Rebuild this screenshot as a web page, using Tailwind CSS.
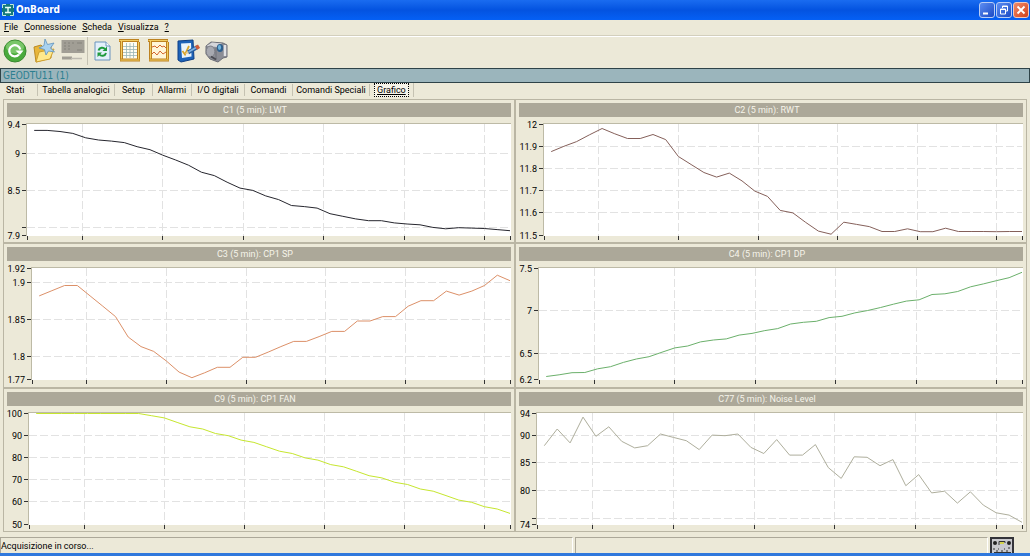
<!DOCTYPE html>
<html lang="it">
<head>
  <meta charset="UTF-8">
  <meta name="viewport" content="width=device-width, initial-scale=1">
  <title>OnBoard</title>
  <script src="https://cdn.jsdelivr.net/npm/@tailwindcss/browser@4"></script>
</head>
<body class="h-screen flex flex-col overflow-hidden bg-[#ece9d8] text-black text-[9px] leading-3 font-['Roboto','Liberation_Sans',sans-serif]">

  <!-- Title bar -->
  <header class="h-5 shrink-0 flex items-center gap-0.5 pl-0.5 pr-px bg-linear-to-b from-[#1a6cf0] via-[#0453e0] to-[#0560f5]">
    <svg class="size-3" viewBox="0 0 12 12">
      <rect width="12" height="12" fill="#147a7c"/>
      <path d="M.5 4V.5H4M8 .5h3.5V4M11.5 8v3.5H8M4 11.5H.5V8" fill="none" stroke="#bfe8e0"/>
      <path d="M3 3.5h6M6 3.5v5M3 8.5h6" fill="none" stroke="#e8fffa" stroke-width="1.4"/>
    </svg>
    <h1 class="flex-1 text-white font-bold text-[10px] font-['DejaVu_Sans_Condensed','DejaVu_Sans',sans-serif]">OnBoard</h1>
    <div class="flex gap-px">
      <button aria-label="Riduci a icona" class="size-4 rounded-[3px] border border-[#b9cdf5] bg-linear-to-br from-[#5d8df2] to-[#1c49c4]">
        <svg viewBox="0 0 14 14"><path d="M3 10.5h5" stroke="#fff" stroke-width="2"/></svg>
      </button>
      <button aria-label="Ripristina" class="size-4 rounded-[3px] border border-[#b9cdf5] bg-linear-to-br from-[#5d8df2] to-[#1c49c4]">
        <svg viewBox="0 0 14 14" fill="none" stroke="#fff"><path d="M5.5 5V3h5v5H9M5.5 3.5h5"/><path d="M3.5 6h5v5h-5zM3.5 6.5h5"/></svg>
      </button>
      <button aria-label="Chiudi" class="size-4 rounded-[3px] border border-[#efc8bc] bg-linear-to-br from-[#f08a68] to-[#cf3f16]">
        <svg viewBox="0 0 14 14"><path d="M3.5 3.5l7 7M10.5 3.5l-7 7" stroke="#fff" stroke-width="1.8"/></svg>
      </button>
    </div>
  </header>

  <!-- Menu -->
  <nav class="h-4 shrink-0 flex items-center gap-1.5 pl-1 pb-px border-b border-[#d3cfbd]">
    <button><u>F</u>ile</button>
    <button><u>C</u>onnessione</button>
    <button><u>S</u>cheda</button>
    <button><u>V</u>isualizza</button>
    <button><u>?</u></button>
  </nav>

  <!-- Toolbar -->
  <div class="h-8 shrink-0 flex items-center pb-1 border-t border-white">
    <button aria-label="Aggiorna" class="w-[29px] flex justify-center">
      <svg class="size-6" viewBox="0 0 24 24">
        <circle cx="12" cy="12" r="11" fill="#4aaa3c" stroke="#3b8a31"/>
        <ellipse cx="12" cy="8" rx="9" ry="6.5" fill="#9ad886" opacity=".6"/>
        <path d="M16 15.5A5.6 5.6 0 1 1 17.3 10.5" fill="none" stroke="#fff" stroke-width="2.2"/>
        <path d="M12.5 11.5h8l-3.6 4.5z" fill="#fff"/>
      </svg>
    </button>
    <button aria-label="Apri" class="w-[29px] flex justify-center">
      <svg class="size-6" viewBox="0 0 24 24">
        <path d="M2 8l7-2 2 2 8-1v12L4 23z" fill="#e8b63a" stroke="#b98a25"/>
        <path d="M4 23l3-10 15-3-4 10z" fill="#ffe98c" stroke="#cfa02e"/>
        <path d="M13 0l2.5 5.5L22 4l-3.5 5 4 4-6-1-2.5 4-1.5-5.5L7 9l5-2.5z" fill="#a9d2f0" stroke="#5e92bd" stroke-width=".8"/>
      </svg>
    </button>
    <button aria-label="Scheda" class="w-[29px] flex justify-center">
      <svg class="size-6" viewBox="0 0 24 24">
        <path d="M.5 1h23v13H.5z" fill="#a19e95"/>
        <path d="M3 4h2M7 4h2M11 4h2M3 7h2M7 7h2M3 10h2M7 10h2M16 4h5M16 11h5" stroke="#84827a"/>
        <path d="M1 19h10" stroke="#a19e95" stroke-width="3"/>
        <path d="M10 19.5h11" stroke="#bdbab0" stroke-width="1.5"/>
      </svg>
    </button>
    <div class="h-7 border-l border-[#c5c2b2]"></div>
    <button aria-label="Ricarica pagina" class="w-[27px] flex justify-center">
      <svg class="size-6" viewBox="0 0 24 24">
        <path d="M5 3h11l4 4v14H5z" fill="#e3f0fa" stroke="#6b94bd"/>
        <path d="M16 3v4h4" fill="#fff" stroke="#6b94bd"/>
        <path d="M8.5 11.5c1-3.5 5-3.5 6.5-1.5M16 14c-1 3.5-5 3.5-6.5 1.5" fill="none" stroke="#1f9a3d" stroke-width="2"/>
        <path d="M17 7.5V12h-4.5zM7.5 18v-4.5H12z" fill="#1f9a3d"/>
      </svg>
    </button>
    <button aria-label="Tabella" class="w-[29px] flex justify-center">
      <svg class="size-6" viewBox="0 0 24 24">
        <path d="M4 3h16v17H4z" fill="#fffdf0"/>
        <path d="M5 7.5h14M5 10.5h14M5 13.5h14M5 16.5h14M8.5 4v15M12 4v15M15.5 4v15" stroke="#9ab5b6" stroke-width=".8"/>
        <path d="M1 1.5h20M3.5 2v19" stroke="#bd8220" stroke-width="3"/>
        <path d="M1.5 1.5h19M3.5 2v18" stroke="#f2cd62"/>
        <path d="M20.5 3v17M2 21h20" stroke="#bd8220" stroke-width="3"/>
        <path d="M20.5 3v17M2.5 21h19" stroke="#f2cd62"/>
      </svg>
    </button>
    <button aria-label="Grafico" class="w-[29px] flex justify-center">
      <svg class="size-6" viewBox="0 0 24 24">
        <path d="M4 3h16v17H4z" fill="#fff6d8"/>
        <path d="M5 8l3-1 2 2 3-3 2 2 2-1 2 2M5 15l2-2 3 3 3-4 3 3 3-2" fill="none" stroke="#d3662e"/>
        <path d="M1 1.5h20M3.5 2v19" stroke="#bd8220" stroke-width="3"/>
        <path d="M1.5 1.5h19M3.5 2v18" stroke="#f2cd62"/>
        <path d="M20.5 3v17M2 21h20" stroke="#bd8220" stroke-width="3"/>
        <path d="M20.5 3v17M2.5 21h19" stroke="#f2cd62"/>
      </svg>
    </button>
    <button aria-label="Configura" class="w-[29px] flex justify-center">
      <svg class="size-6" viewBox="0 0 24 24">
        <path d="M2 2l15-1 1 19-13 3-3-2z" fill="#1d63b8" stroke="#0e3f86"/>
        <path d="M5 4.5l10-.5.5 13.500L6 19z" fill="#eaf4fb"/>
        <path d="M6.5 12l2.500 3.500L13 7" fill="none" stroke="#d9a52a" stroke-width="1.8"/>
        <path d="M12 13.5L21.5 8" stroke="#285f9f" stroke-width="4"/>
        <path d="M12.5 13L21 8" stroke="#7fb2e4" stroke-width="1.5"/>
        <path d="M20 9l3-1.800" stroke="#cf5b38" stroke-width="4"/>
        <path d="M9 15l2.500-3 1.500 2.500z" fill="#e8cf9a"/>
      </svg>
    </button>
    <button aria-label="Registra" class="w-[29px] flex justify-center">
      <svg class="size-6" viewBox="0 0 24 24">
        <path d="M1 7l5-4 12 1 4 2v12l-4 1-5 4-8-3-4-5z" fill="#8b8d95" stroke="#6c6e76"/>
        <path d="M1.500 7l5.500-3.500 10 1L12 8z" fill="#d5d6da"/>
        <ellipse cx="5.5" cy="12.5" rx="4.3" ry="5.5" fill="#a7a9b0" stroke="#7d7f87"/>
        <path d="M11 9v12" stroke="#70727a"/>
        <ellipse cx="15" cy="9" rx="3.2" ry="4" fill="#2f5f8c"/>
        <ellipse cx="14.5" cy="8.5" rx="1.6" ry="2.4" fill="#6fb4dc"/>
        <path d="M20 6v11" stroke="#e1e2e5" stroke-width="2.5"/>
        <path d="M6 17.5l5 3" stroke="#4a4b52" stroke-width="2"/>
      </svg>
    </button>
  </div>

  <div class="h-[15px] shrink-0 flex items-center pl-0.5 border border-[#2e4348] bg-[#9bb5bc] text-[10px] text-[#2c7f90] font-['DejaVu_Sans_Condensed','DejaVu_Sans',sans-serif]">GEODTU11 (1)</div>

  <!-- Tabs -->
  <nav class="h-4 shrink-0 flex items-center pb-0.5 text-center whitespace-nowrap">
    <a href="#" class="w-[38px] pl-1.5 text-left border-r border-[#c5c2b2]">Stati</a>
    <a href="#" class="w-[77px] border-r border-[#c5c2b2]">Tabella analogici</a>
    <a href="#" class="w-[38px] border-r border-[#c5c2b2]">Setup</a>
    <a href="#" class="w-[39px] border-r border-[#c5c2b2]">Allarmi</a>
    <a href="#" class="w-[53px] border-r border-[#c5c2b2]">I/O digitali</a>
    <a href="#" class="w-12 border-r border-[#c5c2b2]">Comandi</a>
    <a href="#" class="w-[77px] border-r border-[#c5c2b2]">Comandi Speciali</a>
    <div class="px-1 border-r border-[#c5c2b2]">
      <a href="#" aria-current="page" class="block px-0.5 border border-dotted border-black bg-[#f6f4ea] underline">Grafico</a>
    </div>
  </nav>

  <main id="charts" class="flex-1 min-h-0 grid grid-cols-2 grid-rows-3 px-[3px]">
    <!-- Panels are added by the script -->
  </main>

  <!-- Status bar -->
  <footer class="mt-[5px] h-4 shrink-0 flex gap-0.5 pr-4">
    <div class="w-4/7 mr-auto max-w-[573px] grow flex items-center border-t border-l border-r border-t-[#aca899] border-l-[#aca899] border-r-white">Acquisizione in corso...</div>
    <div class="flex-1 border-t border-l border-r border-t-[#aca899] border-l-[#aca899] border-r-white"></div>
    <svg class="w-6 h-4" viewBox="0 0 24 16">
      <path d="M0 0h24v16H0z" fill="#34343a"/>
      <path d="M2 2h20v14H2z" fill="#c9c9ce"/>
      <circle cx="5" cy="6" r="2" fill="#222"/><circle cx="19" cy="6" r="2" fill="#222"/>
      <path d="M9 8V4.5h6V6" fill="none" stroke="#333"/>
      <path d="M10 5h4v2h-4z" fill="#d5d34c"/>
      <path d="M3 12h2M6 14h2M8 12h1M11 14h2M14 12h1M16 14h2M18 11h2M4 15.5h17" stroke="#333"/>
    </svg>
  </footer>
  <div class="h-[3px] shrink-0 bg-[#2f78dd]"></div>

  <script>
    const charts = [
      { title: "C1 (5 min): LWT", color: "#26262e", left: 20, max: 9.4, min: 7.9, ticks: [9.4, 9, 8.5, 8, 7.9], hidden: 8,
        data: [9.32, 9.32, 9.305, 9.28, 9.22, 9.19, 9.175, 9.155, 9.1, 9.06, 8.985, 8.92, 8.85, 8.755, 8.71, 8.62, 8.54, 8.51, 8.435, 8.385, 8.305, 8.29, 8.27, 8.195, 8.16, 8.125, 8.1, 8.1, 8.07, 8.055, 8.045, 8.01, 7.99, 8.005, 8, 7.995, 7.98, 7.965] },
      { title: "C2 (5 min): RWT", color: "#85605a", left: 25, max: 12, min: 11.5, ticks: [12, 11.9, 11.8, 11.7, 11.6, 11.5],
        data: [11.878, 11.902, 11.923, 11.953, 11.982, 11.958, 11.937, 11.937, 11.955, 11.932, 11.856, 11.82, 11.784, 11.763, 11.781, 11.746, 11.7, 11.676, 11.613, 11.602, 11.559, 11.52, 11.506, 11.56, 11.55, 11.54, 11.518, 11.518, 11.53, 11.517, 11.517, 11.533, 11.518, 11.518, 11.518, 11.517, 11.518, 11.518] },
      { title: "C3 (5 min): CP1 SP", color: "#dc9068", left: 25, max: 1.92, min: 1.77, ticks: [1.92, 1.9, 1.85, 1.8, 1.77],
        data: [1.883, 1.89, 1.897, 1.897, 1.883, 1.869, 1.855, 1.8275, 1.8145, 1.808, 1.795, 1.78, 1.7725, 1.779, 1.7865, 1.7865, 1.8, 1.8, 1.807, 1.8145, 1.8215, 1.8215, 1.828, 1.835, 1.835, 1.849, 1.849, 1.855, 1.855, 1.869, 1.8765, 1.8765, 1.8895, 1.884, 1.8895, 1.897, 1.911, 1.9035] },
      { title: "C4 (5 min): CP1 DP", color: "#6bb06b", left: 20, max: 7.5, min: 6.2, ticks: [7.5, 7, 6.5, 6.2],
        data: [6.235, 6.255, 6.28, 6.282, 6.325, 6.35, 6.4, 6.44, 6.467, 6.52, 6.57, 6.592, 6.64, 6.663, 6.675, 6.72, 6.74, 6.773, 6.796, 6.85, 6.87, 6.882, 6.925, 6.94, 6.98, 7.008, 7.043, 7.082, 7.118, 7.133, 7.196, 7.204, 7.231, 7.286, 7.32, 7.357, 7.392, 7.455] },
      { title: "C9 (5 min): CP1 FAN", color: "#c6e62e", left: 22, max: 100, min: 50, ticks: [100, 90, 80, 70, 60, 50],
        data: [100, 100, 100, 100, 100, 100, 100, 100, 100, 99, 98, 96, 94, 93, 91, 90, 88, 87, 85, 83, 82, 80, 79, 77, 76, 74, 72, 71, 69, 68, 66, 65, 63, 61, 60, 58, 57, 55] },
      { title: "C77 (5 min): Noise Level", color: "#aeae9c", left: 18, max: 94, min: 74, ticks: [94, 90, 85, 80, 75, 74], hidden: 75,
        data: [88.2, 91.2, 88.7, 93.35, 89.9, 91.6, 89, 87.8, 88.2, 90.3, 89.7, 89.1, 87.5, 90.1, 90, 90.3, 87.9, 86.8, 89.3, 86.5, 86.5, 88.4, 84.25, 82.3, 86.2, 86.1, 84.6, 85.7, 81, 83, 79.7, 80, 77.85, 79.9, 77.5, 76.1, 75.7, 74.4] }
    ];

    // time marks, as a fraction of the plot width
    const marks = [0, 0.114, 0.28, 0.447, 0.613, 0.78, 0.946, 1];

    const container = document.getElementById("charts");
    charts.forEach((c) => {
      const panel = document.createElement("section");
      panel.className = "min-h-0 min-w-0 flex flex-col border border-[#bab6a4] px-[3px] pt-[3px] pb-0.5";
      panel.innerHTML = `
        <h2 class="h-3.5 shrink-0 pr-2 text-center leading-[14px] bg-[#aca899] text-[#f6f4ea]">${c.title}</h2>
        <div class="flex-1 min-h-0"><svg class="block size-full" role="img" aria-label="${c.title}"></svg></div>`;
      container.appendChild(panel);
      c.svg = panel.querySelector("svg");
    });

    function draw(c) {
      const right = c.svg.clientWidth - 1;
      const top = 6;
      const bottom = Math.floor(c.svg.clientHeight) - 4;
      const width = right - c.left;
      const x = (f) => Math.round(c.left + f * width);
      const y = (v) => top + 1 + (c.max - v) / (c.max - c.min) * (bottom - top - 2);

      let out = `<rect x="${c.left}" y="${top}" width="${width + 1}" height="${bottom - top}" fill="#fff"/>`;
      out += `<g shape-rendering="crispEdges" fill="none">`;
      marks.forEach((m, i) => {
        if (i > 0 && i < marks.length - 1) {
          out += `<path d="M${x(m) + 0.5} ${top + 1}V${bottom}" stroke="#e2e2e2" stroke-dasharray="8 3"/>`;
        }
        out += `<path d="M${x(m) + 0.5} ${bottom}v4" stroke="#333"/>`;
      });
      c.ticks.forEach((t) => {
        const ty = Math.floor(y(t)) + 0.5;
        if (t !== c.max && t !== c.min) {
          out += `<path d="M${c.left} ${ty}H${right}" stroke="#e2e2e2" stroke-dasharray="8 3"/>`;
        }
        out += `<path d="M${c.left - 5} ${ty}h5" stroke="#333"/>`;
      });
      out += `<path d="M${c.left - 0.5} ${bottom}V${top + 0.5}H${right + 1}" stroke="#bdbaa6"/></g>`;
      c.ticks.forEach((t) => {
        if (t !== c.hidden) {
          out += `<text x="${c.left - 7}" y="${Math.floor(y(t)) + 4}" text-anchor="end">${t}</text>`;
        }
      });
      const pts = c.data.map((v, i) => {
        const px = c.left + (0.015 + 0.985 * i / (c.data.length - 1)) * width;
        return px.toFixed(1) + "," + (y(v) + 0.5).toFixed(1);
      });
      out += `<polyline points="${pts.join(" ")}" fill="none" stroke="${c.color}"/>`;
      c.svg.innerHTML = out;
    }

    function drawAll() {
      charts.forEach(draw);
    }

    window.addEventListener("resize", drawAll);
    window.addEventListener("load", drawAll);
    drawAll();
  </script>
</body>
</html>
